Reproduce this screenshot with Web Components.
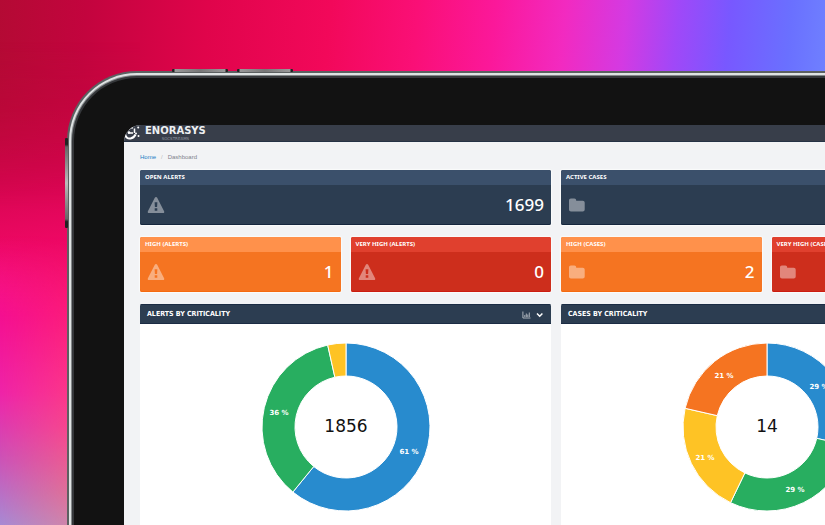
<!DOCTYPE html>
<html lang="en">
<head>
<meta charset="utf-8">
<meta name="viewport" content="width=device-width, initial-scale=1">
<title>Enorasys Dashboard</title>
<style>
  html, body { margin: 0; height: 100%; overflow: hidden; }
  body { font-family: "Noto Sans", "Open Sans", sans-serif; color: #fff; }
</style>
</head>
<body>
<app-stage>
  <tablet-frame>
    <app-nav></app-nav>
    <bread-crumb current="Dashboard"><a href="#home">Home</a></bread-crumb>
    <dash-grid>
      <stat-card wide tone="navy" icon="alert" label="OPEN ALERTS">1699</stat-card>
      <stat-card wide tone="navy" icon="folder" label="ACTIVE CASES"></stat-card>
      <stat-card tone="orange" icon="alert" label="HIGH (ALERTS)">1</stat-card>
      <stat-card tone="red" icon="alert" label="VERY HIGH (ALERTS)">0</stat-card>
      <stat-card tone="orange" icon="folder" label="HIGH (CASES)">2</stat-card>
      <stat-card tone="red" icon="folder" label="VERY HIGH (CASES)"></stat-card>
      <chart-panel label="ALERTS BY CRITICALITY">
        <donut-chart total="1856" slices="60.9:#288bce:61 %,35.6:#28ae60:36 %,3.5:#fec325:"></donut-chart>
      </chart-panel>
      <chart-panel label="CASES BY CRITICALITY">
        <donut-chart total="14" slices="4:#288bce:29 %,4:#28ae60:29 %,3:#fec325:21 %,3:#f57421:21 %"></donut-chart>
      </chart-panel>
    </dash-grid>
  </tablet-frame>
</app-stage>

<script>
class Base extends HTMLElement {
  connectedCallback() {
    if (this.shadowRoot) return;
    this.attachShadow({ mode: "open" }).innerHTML = this.view();
  }
}

const ICONS = {
  alert: '<svg viewBox="0 0 18 18" aria-hidden="true"><path fill-rule="evenodd" d="M9 1c.5 0 .9.3 1.200.8l6.900 13.400c.5.900 0 1.800-1 1.800H1.900c-1 0-1.500-.9-1-1.800L7.800 1.800C8.100 1.300 8.500 1 9 1zM7.600 6.200l.3 4.900h2.200l.3-4.900zM7.700 12.200v2.600h2.600v-2.600z"/></svg>',
  folder: '<svg viewBox="0 0 18 18" aria-hidden="true"><path d="M1 4.500C1 3.300 1.700 2.500 2.900 2.500h3.400c1.200 0 1.900.8 1.900 2v.2h6.500c1.200 0 2 .8 2 2v6.800c0 1.200-.8 2-2 2H3c-1.200 0-2-.8-2-2z"/></svg>'
};

customElements.define("app-stage", class extends Base {
  view() {
    return `<style>
      :host { display: block; position: relative; height: 100vh; overflow: hidden; box-sizing: border-box; padding: 71px 0 0 67px;
        background: linear-gradient(95deg, #b40a34 0%, #c3043e 10%, #e0044b 24%, #f2085a 38%, #fa0f76 48%, #fb189a 57%, #f22ac0 65%, #d43ae2 72%, #a048f8 78%, #7858ff 84%, #6a70ff 91%, #7490ff 100%); }
      .side, .tint { position: absolute; inset: 0 auto 0 0; width: 140px; }
      .side {
        background: linear-gradient(172deg, #b40a34 0%, #c3063f 20%, #d60550 33%, #ee0864 46%, #fd1c76 58%, #ff3382 70%, #fd4887 80%, #e8708f 92%, #d58aa8 100%);
        -webkit-mask: linear-gradient(transparent 8%, #000 40%); mask: linear-gradient(transparent 8%, #000 40%); }
      .tint {
        background: linear-gradient(transparent 45%, #f40f90 60%, #ee24a8 75%, #ca55b8 88%, #a68ad4 100%);
        -webkit-mask: linear-gradient(90deg, #000, transparent 60%); mask: linear-gradient(90deg, #000, transparent 60%); }
    </style><div class="side"></div><div class="tint"></div><slot></slot>`;
  }
});

customElements.define("tablet-frame", class extends Base {
  view() {
    return `<style>
      :host { display: block; position: relative; margin-right: -220px; }
      .rim { border-radius: 70px; padding: 2px; background: #5c6061; }
      .shine { border-radius: 68px; padding: 2px; background: #dfe3e3; }
      .edge { border-radius: 66px; padding: 1px; background: #84888a; }
      .lip { border-radius: 65px; padding: 2px; background: #35373a; }
      .bezel { border-radius: 63px; padding: 47px 50px; background: #121212; }
      .screen { border-radius: 17px; overflow: hidden; background: #f2f3f5; min-height: 600px; }
      .key { position: absolute; background: linear-gradient(90deg, #222 0 3%, #999 6%, #777 50%, #999 94%, #222 97%); height: 3px; width: 56px; top: -2px; border-radius: 1px; }
      .k1 { left: 105px; } .k2 { left: 170px; }
      .k3 { left: -2px; top: 67px; width: 3px; height: 90px; background: linear-gradient(#222 0 7%, #666 10%, #bbb 50%, #666 90%, #222 93%); }
    </style>
    <div class="key k1"></div><div class="key k2"></div><div class="key k3"></div>
    <div class="rim"><div class="shine"><div class="edge"><div class="lip"><div class="bezel"><div class="screen"><slot></slot></div></div></div></div></div></div>`;
  }
});

customElements.define("app-nav", class extends Base {
  view() {
    return `<style>
      :host { display: flex; align-items: flex-start; gap: 5px; height: 16px; background: #383e4a; border-bottom: 1px solid #253244; font-family: "DejaVu Sans", sans-serif; }
      svg { width: 16px; height: 16px; display: block; }
      .brand { display: grid; justify-items: center; }
      b { font-size: 10px; line-height: 12px; color: #eef0f2; }
      small { font-size: 4px; line-height: 4px; color: #8e949e; }
    </style>
    <svg viewBox="0 0 16 16" fill="none" stroke="#fff" aria-hidden="true">
      <path stroke-width="2" d="M1 9c.5 3.500 3 5 5.500 4.500 2.500-.3 4-1.800 5-4"/>
      <path stroke-width="1.500" d="M4 8h5M10.500 3.500v4.500M5 4.500c1-1.300 2.500-2 4-1.500"/>
      <g fill="#fff" stroke="none"><circle cx="5" cy="7.500" r="1.300"/><circle cx="14.200" cy="2.500" r="1"/><circle cx="14.500" cy="11" r="1"/><circle cx="12" cy="8.500" r="1"/></g>
    </svg>
    <div class="brand"><b>ENORASYS</b><small>SOCSTREAMS</small></div>`;
  }
});

customElements.define("bread-crumb", class extends Base {
  view() {
    return `<style>
      :host { display: block; padding: 11px 16px 9px; font: 6px/8px "Liberation Sans", sans-serif; color: #7d838c; }
      nav { display: flex; gap: 5px; }
      i { font-style: normal; color: #bbb; }
      ::slotted(a) { color: #1b7cc4; text-decoration: none; }
    </style><nav aria-label="Breadcrumb"><slot></slot><i>/</i><span>${this.getAttribute("current")}</span></nav>`;
  }
});

customElements.define("dash-grid", class extends Base {
  view() {
    return `<style>
      :host { display: grid; grid-template-columns: repeat(4, 1fr); gap: 12px 10px; padding: 0 16px 16px; }
    </style><slot></slot>`;
  }
});

customElements.define("stat-card", class extends Base {
  view() {
    const tones = { navy: ["#3b506b", "#2c3d51", "#15263d"], orange: ["#ff914b", "#f57421", "#f56a10"], red: ["#e0402e", "#cd2e1c", "#cc1c10"] };
    const [head, body, line] = tones[this.getAttribute("tone")];
    return `<style>
      :host { display: block; border-radius: 2px; overflow: hidden; background: ${body}; box-shadow: inset 0 -1px ${line}, 0 0 1px 1px #fafbfb; }
      :host([wide]) { grid-column: span 2; }
      h3 { margin: 0; padding: 0 5px; font: bold 6px/15px "Noto Sans", sans-serif; background: ${head}; white-space: nowrap; }
      .row { display: flex; align-items: center; justify-content: space-between; height: 40px; padding: 0 7px; }
      svg { width: 18px; height: 18px; fill: #fff; opacity: .42; display: block; }
      .num { font: 500 17px/20px "Noto Sans", sans-serif; }
    </style><h3>${this.getAttribute("label")}</h3><div class="row">${ICONS[this.getAttribute("icon")]}<span class="num"><slot></slot></span></div>`;
  }
});

customElements.define("chart-panel", class extends Base {
  view() {
    return `<style>
      :host { display: block; grid-column: span 2; border-radius: 2px; overflow: hidden; background: #fff; }
      header { display: flex; align-items: center; height: 20px; padding: 0 7px; gap: 4px; background: #2c3d51; box-shadow: inset 0 1px #1b2c44, inset 0 -1px #1b2c44; }
      h2 { margin: 0; flex: 1; font: bold 7px/20px "DejaVu Sans Condensed", "DejaVu Sans", sans-serif; }
      button { border: 0; padding: 0; background: none; color: #fff; display: block; }
      svg { display: block; width: 9px; height: 9px; fill: none; stroke: currentColor; }
      .body { padding: 18px 0 30px; }
    </style>
    <header><h2>${this.getAttribute("label")}</h2>
      <button type="button" aria-label="Chart type"><svg viewBox="0 0 9 9" opacity=".75"><path stroke-width=".8" d="M.9 1.500v6.500H8.500M2.800 5v2M4.300 3.500v3.500M5.800 4.500v2.500M7.300 2.500v4.500"/></svg></button>
      <button type="button" aria-label="Collapse"><svg viewBox="0 0 9 9"><path stroke-width="1.500" d="M2 3.500l2.700 2.700L7.400 3.500"/></svg></button>
    </header><div class="body"><slot></slot></div>`;
  }
});

customElements.define("donut-chart", class extends Base {
  view() {
    const R = 84, r = 51, C = 85;
    const slices = this.getAttribute("slices").split(",").map(s => s.split(":"));
    const sum = slices.reduce((t, s) => t + Number(s[0]), 0);
    const at = (turn, rad) => [C + rad * Math.sin(turn * 2 * Math.PI), C - rad * Math.cos(turn * 2 * Math.PI)].map(v => v.toFixed(2)).join(" ");
    let a = 0, arcs = "", labels = "";
    for (const [v, color, text] of slices) {
      const b = a + v / sum, big = b - a > 0.5 ? 1 : 0;
      arcs += `<path fill="${color}" d="M${at(a, R)}A${R} ${R} 0 ${big} 1 ${at(b, R)}L${at(b, r)}A${r} ${r} 0 ${big} 0 ${at(a, r)}Z"/>`;
      const [x, y] = at((a + b) / 2, (R + r) / 2).split(" ").map(Number);
      if (text) labels += `<text class="pct" x="${Math.round(x - 1)}" y="${Math.round(y + 4)}">${text}</text>`;
      a = b;
    }
    return `<style>
      :host { display: block; }
      svg { display: block; width: 170px; height: 170px; margin: 0 auto; overflow: visible; }
      path { stroke: #fff; stroke-width: 1; }
      text { text-anchor: middle; }
      .pct { font: bold 7px "DejaVu Sans", sans-serif; fill: #fff; }
      .total { font: 17px "DejaVu Sans", sans-serif; fill: #111; }
    </style><svg viewBox="0 0 170 170" role="img">${arcs}${labels}<text class="total" x="${C}" y="90">${this.getAttribute("total")}</text></svg>`;
  }
});
</script>
</body>
</html>
